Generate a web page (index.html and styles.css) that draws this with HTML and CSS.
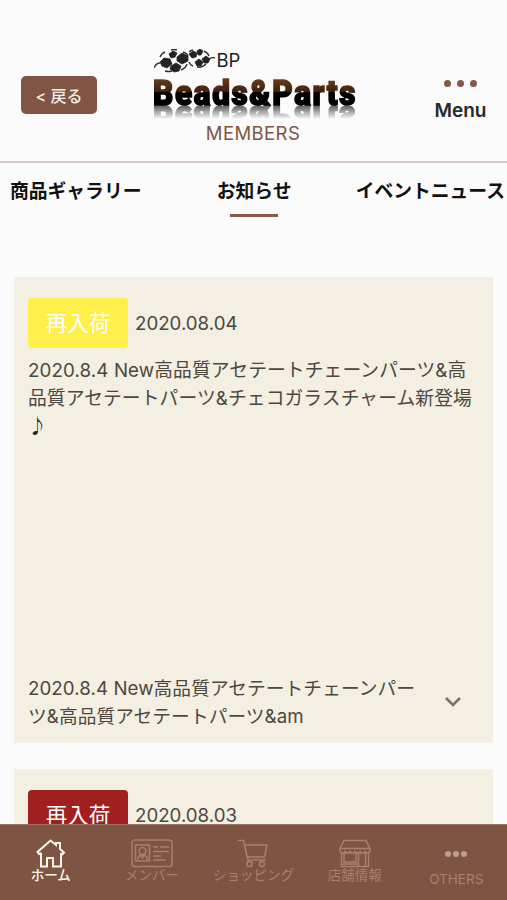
FILE: index.html
```html
<!DOCTYPE html>
<html lang="ja">
<head>
    <meta charset="UTF-8">
    <meta name="viewport" content="width=device-width, initial-scale=1.0">
    <title>Beads&amp;Parts MEMBERS</title>
    <link rel="stylesheet" href="styles.css">
</head>
<body>
    <header class="header">
        <button class="back-button">&lt; 戻る</button>
        <div class="logo">
            <div class="logo-top">
                <svg class="beads" width="62" height="25" viewBox="0 0 62 25">
                    <g fill="none" stroke="#333" stroke-width="1.4">
                        <path d="M0 19q2-5 6-5M6 8q2-4 5-5M17 1q3-1 6 0M29 3q4 1 5 4M11 22q4 1 7 0M27 21q5-2 6-6M35 3q2-2 4-2M50 2q4 2 5 5M35 13q1 3 4 4M43 18q5 1 9-3M55 10q3-2 6-1"/>
                    </g>
                    <g fill="#222" stroke="#222" stroke-width=".8">
                        <path d="M15 5l4-3 4 2-2 4-4 1zM6 13l4-4 6 1 2 5-5 4-5-2zM23 8l5-4 6 3 0 5-6 3-5-3zM17 17l5-3 5 3-2 5-5 1-4-3zM35 5l4-3 4 2-1 4-4 1zM43 2l3-2 3 2-2 4-3 0zM48 10l4-3 4 3-2 4-4 0zM41 13l4-3 4 3-2 4-4 0z"/>
                    </g>
                </svg>
                <span class="logo-bp">BP</span>
            </div>
            <svg class="logo-name" width="204" height="28" viewBox="0 0 204 28">
                <defs>
                    <linearGradient id="ink" gradientUnits="userSpaceOnUse" x1="0" y1="0" x2="0" y2="27">
                        <stop offset="0" stop-color="#6b3f1d"/>
                        <stop offset=".5" stop-color="#3f210d"/>
                        <stop offset=".54" stop-color="#000"/>
                        <stop offset="1" stop-color="#000"/>
                    </linearGradient>
                </defs>
                <text x="0" y="26.500" transform="scale(.9 1)" textLength="225" lengthAdjust="spacing">Beads&amp;Parts</text>
            </svg>
            <div class="logo-members">MEMBERS</div>
        </div>
        <div class="menu">
            <div class="menu-dots"><i></i><i></i><i></i></div>
            <div class="menu-label">Menu</div>
        </div>
    </header>

    <nav class="tabs">
        <a class="tab">商品ギャラリー</a>
        <a class="tab active">お知らせ</a>
        <a class="tab">イベントニュース</a>
    </nav>

    <main class="news">
        <article class="card">
            <div class="card-head">
                <span class="badge yellow">再入荷</span>
                <time class="date">2020.08.04</time>
            </div>
            <h2 class="card-title">2020.8.4 New高品質アセテートチェーンパーツ&amp;高品質アセテートパーツ&amp;チェコガラスチャーム新登場<br><span class="note">♪</span></h2>
            <div class="card-foot">
                <p class="excerpt">2020.8.4 New高品質アセテートチェーンパーツ&amp;高品質アセテートパーツ&amp;am</p>
                <svg class="chevron" width="18" height="12" viewBox="0 0 18 12">
                    <path d="M2 1l7 7 7-7" fill="none" stroke="#77736b" stroke-width="2.6"/>
                </svg>
            </div>
        </article>
        <article class="card">
            <div class="card-head">
                <span class="badge red">再入荷</span>
                <time class="date">2020.08.03</time>
            </div>
        </article>
    </main>

    <footer class="bottom-nav">
        <a class="nav-item active">
            <svg width="30" height="29" viewBox="0 0 30 29">
                <path d="M5 14v13.500h6V19h6v8.500h8V14M5 14l-2 1-1.500-2L14.500 1.500 20 6V4h4v6l4 3.500-2 2-1.500-1.500"/>
            </svg>
            <span>ホーム</span>
        </a>
        <a class="nav-item">
            <svg width="42" height="29" viewBox="0 0 42 29">
                <rect x="1" y="1" width="40" height="26.500" rx="3"/>
                <rect x="4.500" y="6" width="14" height="16"/>
                <circle cx="11.500" cy="12" r="3.500"/>
                <path d="M6.500 21c0-4 2-5 5-5s5 1 5 5M9 16l2.500 3 2.500-3M22 8h5M29 8h9M22 12.500h16M22 17h8M22 21h13"/>
            </svg>
            <span>メンバー</span>
        </a>
        <a class="nav-item">
            <svg width="32" height="29" viewBox="0 0 32 29">
                <path d="M1 1.500h5.500L11 21h18M8 6h22l-2.500 12H10.500"/>
                <circle cx="12.500" cy="25" r="2.500"/>
                <circle cx="25" cy="25" r="2.500"/>
            </svg>
            <span>ショッピング</span>
        </a>
        <a class="nav-item">
            <svg width="34" height="29" viewBox="0 0 34 29">
                <path d="M6 1.500h22l4 8H2zM2 9.500v3q2.500 3 5 0 2.500 3 5 0 2.500 3 5 0 2.500 3 5 0 2.500 3 5 0 2.500 3 5 0v-3M3.500 14v13.500h27V14M3.500 25h17M6 14h12v9H6zM20.500 27V14h7v13"/>
            </svg>
            <span>店舗情報</span>
        </a>
        <a class="nav-item others">
            <svg width="24" height="8" viewBox="0 0 24 8">
                <g class="dots"><circle cx="4" cy="4" r="3"/><circle cx="12" cy="4" r="3"/><circle cx="20" cy="4" r="3"/></g>
            </svg>
            <span>OTHERS</span>
        </a>
    </footer>
</body>
</html>
```
FILE: styles.css
```css
* {
    box-sizing: border-box;
    margin: 0;
    padding: 0;
}

body {
    display: flex;
    flex-direction: column;
    height: 900px;
    overflow: hidden;
    background-color: #fbfbfb;
    color: #4c4840;
    font-family: Inter, "Noto Sans CJK JP", sans-serif;
    font-size: 18.7px;
}

/* header */
.header {
    flex: none;
    display: flex;
    justify-content: space-between;
    align-items: flex-start;
    height: 163px;
    padding: 48px 20px 0 21px;
    border-bottom: 2px solid #d9caca;
}

.back-button {
    width: 76px;
    height: 38px;
    margin-top: 28px;
    border: none;
    border-radius: 5px;
    background-color: #805543;
    color: #f8eee8;
    font: 500 16px Inter, "Noto Sans CJK JP", sans-serif;
}

.logo {
    width: 204px;
    margin-right: 22px;
}

.logo-top {
    display: flex;
    height: 30px;
    padding-left: 1px;
}

.beads {
    margin-top: 1px;
}

.logo-bp {
    margin-left: 1px;
    color: #222;
    font-size: 18.5px;
    line-height: 25px;
}

.logo-name {
    display: block;
    overflow: visible;
    -webkit-box-reflect: below -1px linear-gradient(transparent 50%, rgba(0, 0, 0, 0.65));
}

.logo-name text {
    fill: url(#ink);
    stroke: url(#ink);
    stroke-width: 1.6;
    font-family: Roboto, sans-serif;
    font-size: 35px;
    font-weight: 900;
}

.logo-members {
    margin-top: 15px;
    color: #805543;
    font-size: 18.5px;
    line-height: 24px;
    text-align: center;
    letter-spacing: 0.4px;
    text-indent: -3px;
}

.menu {
    width: 53px;
    margin-top: 32px;
    color: #282828;
}

.menu-dots {
    display: flex;
    justify-content: center;
    gap: 6px;
}

.menu-dots i {
    width: 7px;
    height: 7px;
    border-radius: 50%;
    background-color: #865848;
}

.menu-label {
    margin-top: 12px;
    font-size: 19px;
    font-weight: 600;
    line-height: 24px;
    text-align: center;
}

/* tabs */
.tabs {
    flex: none;
    display: flex;
    justify-content: space-between;
    height: 114px;
    padding: 15px 2px 0 10px;
    color: #111;
    font-size: 18.8px;
    font-weight: 600;
    line-height: 28px;
    white-space: nowrap;
}

.tab.active {
    margin-left: 11px;
}

.tab.active::after {
    content: "";
    display: block;
    width: 48px;
    height: 3px;
    margin: 8px auto 0;
    background-color: #865848;
}

/* news */
.news {
    flex: 1;
    display: flex;
    flex-direction: column;
    gap: 26px;
    min-height: 0;
    padding: 0 14px;
    overflow: hidden;
}

.card {
    flex: none;
    display: flex;
    flex-direction: column;
    width: 479px;
    height: 466px;
    padding: 21px 14px 12px;
    background-color: #f4efe3;
}

.card-head {
    display: flex;
    align-items: center;
    gap: 7px;
}

.badge {
    width: 100px;
    height: 50px;
    border-radius: 4px;
    color: #fff;
    font-size: 21.5px;
    line-height: 50px;
    text-align: center;
}

.badge.yellow {
    background-color: #ffef4b;
}

.badge.red {
    background-color: #a02020;
}

.card-title {
    margin-top: 9px;
    font-size: 18.75px;
    font-weight: 400;
    line-height: 28px;
    letter-spacing: 0.1px;
}

.note {
    color: #222;
}

.card-foot {
    display: flex;
    align-items: center;
    justify-content: space-between;
    margin-top: auto;
    padding-right: 17px;
}

.excerpt {
    width: 390px;
    line-height: 28px;
    letter-spacing: 0.08px;
}

/* bottom navigation */
.bottom-nav {
    flex: none;
    display: flex;
    height: 76px;
    padding-top: 14px;
    border-top: 1px solid #9b7565;
    background-color: #7e5442;
}

.nav-item {
    display: flex;
    flex-direction: column;
    align-items: center;
    width: 20%;
    color: #a9806c;
    font-size: 13.5px;
    line-height: 16px;
    white-space: nowrap;
}

.nav-item span {
    margin-top: -1px;
}

.nav-item.active {
    color: #fff5ec;
    font-weight: 500;
}

.nav-item svg {
    fill: none;
    stroke: currentColor;
    stroke-width: 1.5;
}

.nav-item.active svg {
    stroke-width: 2;
}

.nav-item .dots {
    fill: #bd9f8d;
    stroke: none;
}

.nav-item.others svg {
    margin-top: 11px;
}

.nav-item.others span {
    margin-top: 13px;
}
```
